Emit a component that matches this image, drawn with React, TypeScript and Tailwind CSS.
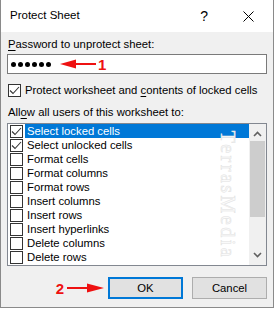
import React from "react";

const items: [string, boolean][] = [
  ["Select locked cells", true],
  ["Select unlocked cells", true],
  ["Format cells", false],
  ["Format columns", false],
  ["Format rows", false],
  ["Insert columns", false],
  ["Insert rows", false],
  ["Insert hyperlinks", false],
  ["Delete columns", false],
  ["Delete rows", false],
];

function Check() {
  return (
    <svg width="11" height="11" viewBox="0 0 11 11" className="block">
      <polyline points="1,5.5 4,8.5 10,2" fill="none" stroke="#333" strokeWidth="1.1" />
    </svg>
  );
}

function Box({ checked }: { checked: boolean }) {
  return (
    <div className="w-[13px] h-[13px] border border-[#333] bg-white flex items-center justify-center shrink-0">
      {checked && <Check />}
    </div>
  );
}

export default function App() {
  const font = { fontFamily: '"Liberation Sans", Arial, sans-serif' };
  return (
    <div className="w-[275px] h-[309px] bg-white text-[11.3px] text-black whitespace-nowrap" style={font}>
      <div className="w-[274px] h-[308px] border-x border-b border-[#8a8a8a] bg-[#f0f0f0] flex flex-col">
        <div className="h-[32px] bg-white flex items-center pl-[9px] shrink-0">
          <span className="text-[11.5px]">Protect Sheet</span>
          <span className="ml-auto text-[14px] mr-[35px]">?</span>
          <svg width="11" height="11" viewBox="0 0 11 11" className="mr-[19px]">
            <path d="M0.5 0.5 L10.5 10.5 M10.5 0.5 L0.5 10.5" stroke="#000" strokeWidth="1" />
          </svg>
        </div>
        <div className="flex flex-col px-[6px]">
          <div className="mt-[5px] h-[15px] leading-[15px] pl-[1px]">
            <span className="underline underline-offset-2">P</span>assword to unprotect sheet:
          </div>
          <div className="mt-[2px] h-[20px] border border-[#7a7a7a] bg-white flex items-center pl-[3px]">
            <div className="flex gap-[2px]">
              {[0, 1, 2, 3, 4, 5].map((i) => (
                <span key={i} className="w-[5px] h-[5px] rounded-full bg-black" />
              ))}
            </div>
            <svg width="36" height="10" viewBox="0 0 36 10" className="ml-[9px]">
              <polygon points="0,5 16,0.5 16,9.5" fill="#ee1111" />
              <rect x="14" y="4" width="22" height="2" fill="#ee1111" />
            </svg>
            <span className="ml-[2px] text-[15px] font-bold text-[#ee1111] leading-none">1</span>
          </div>
          <div className="mt-[9px] h-[14px] flex items-center pl-[1px]">
            <Box checked />
            <span className="ml-[4px]">
              Protect worksheet and <span className="underline underline-offset-2">c</span>ontents of locked cells
            </span>
          </div>
          <div className="mt-[8px] h-[15px] leading-[15px] pl-[1px]">
            All<span className="underline underline-offset-2">o</span>w all users of this worksheet to:
          </div>
          <div className="relative mt-[3px] h-[143px] border border-[#828790] bg-white flex overflow-hidden">
            <div className="flex-1 flex flex-col">
              {items.map(([label, checked], i) => (
                <div key={label} className="h-[14px] flex items-center">
                  <div className="ml-[2px]">
                    <Box checked={checked} />
                  </div>
                  <div
                    className={
                      "ml-[2px] flex-1 h-[14px] leading-[14px] pl-[2px] " +
                      (i === 0 ? "bg-[#0078d7] text-white" : "")
                    }
                  >
                    {label}
                  </div>
                </div>
              ))}
            </div>
            <div className="w-[17px] bg-[#f0f0f0] flex flex-col items-center">
              <svg width="9" height="6" viewBox="0 0 9 6" className="mt-[7px]">
                <polyline points="1,5 4.5,1.5 8,5" fill="none" stroke="#606060" strokeWidth="1.6" />
              </svg>
              <div className="mt-[4px] w-[15px] h-[76px] bg-[#cdcdcd]" />
              <svg width="9" height="6" viewBox="0 0 9 6" className="mt-auto mb-[7px]">
                <polyline points="1,1 4.5,4.5 8,1" fill="none" stroke="#606060" strokeWidth="1.6" />
              </svg>
            </div>
            <div className="absolute left-[204px] top-[2px] w-[32px] h-[138px] flex items-center justify-center pointer-events-none">
              <span
                className="rotate-90 whitespace-nowrap text-[20px] tracking-[2.5px] text-[#fafafa] [-webkit-text-stroke:0.5px_#e2e2e2]"
                style={{ fontFamily: '"Liberation Serif", serif' }}
              >
                TerrasMedia
              </span>
            </div>
          </div>
          <div className="mt-[11px] h-[22px] flex items-center justify-end">
            <span className="text-[15px] font-bold text-[#ee1111] leading-none">2</span>
            <svg width="37" height="10" viewBox="0 0 37 10" className="ml-[3px] mr-[4px]">
              <rect x="0" y="4" width="22" height="2" fill="#ee1111" />
              <polygon points="37,5 20,0.5 20,9.5" fill="#ee1111" />
            </svg>
            <div className="w-[75px] h-[22px] border-2 border-[#0078d7] bg-[#e1e1e1] flex items-center justify-center">
              OK
            </div>
            <div className="ml-[9px] w-[75px] h-[22px] border border-[#adadad] bg-[#e1e1e1] flex items-center justify-center">
              Cancel
            </div>
          </div>
        </div>
      </div>
    </div>
  );
}
